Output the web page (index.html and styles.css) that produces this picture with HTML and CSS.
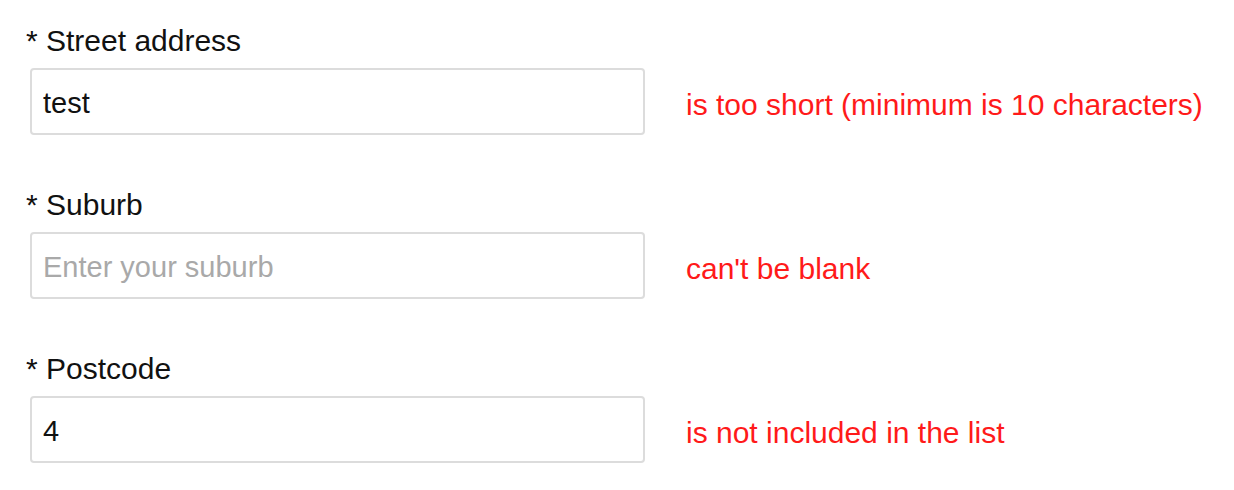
FILE: index.html
```html
<!DOCTYPE html>
<html>
<head>
<meta charset="utf-8">
<link rel="stylesheet" href="styles.css">
</head>
<body>
<form class="form">
  <div class="field">
    <label class="label" for="street">* Street address</label>
    <input class="input" id="street" type="text" value="test">
    <span class="error">is too short (minimum is 10 characters)</span>
  </div>
  <div class="field">
    <label class="label" for="suburb">* Suburb</label>
    <input class="input" id="suburb" type="text" placeholder="Enter your suburb">
    <span class="error">can't be blank</span>
  </div>
  <div class="field">
    <label class="label" for="postcode">* Postcode</label>
    <input class="input" id="postcode" type="text" value="4">
    <span class="error">is not included in the list</span>
  </div>
</form>
</body>
</html>
```
FILE: styles.css
```css
html, body {
  margin: 0;
  padding: 0;
  background: #fff;
}
body {
  font-family: "Liberation Sans", Arial, sans-serif;
  color: #000;
}
.form {
  display: flex;
  flex-direction: column;
  gap: 52px;
  padding: 23px 0 0 26px;
}
.field {
  display: grid;
  grid-template-columns: 615px auto;
  column-gap: 41px;
  row-gap: 9px;
  align-items: center;
}
.label {
  grid-column: 1 / 3;
  font-size: 30px;
  line-height: 36px;
  color: #111;
}
.input {
  box-sizing: border-box;
  width: 615px;
  height: 67px;
  margin-left: 4px;
  border: 2px solid #dcdcdc;
  border-radius: 4px;
  padding: 4px 11px 0;
  font-family: "Liberation Sans", Arial, sans-serif;
  font-size: 29px;
  color: #111;
  outline: none;
  background: #fff;
}
.input::placeholder {
  color: #a9a9a9;
}
.error {
  color: #ff1a1a;
  font-size: 30px;
  line-height: 36px;
  margin-left: 4px;
  padding-top: 7px;
}
```
